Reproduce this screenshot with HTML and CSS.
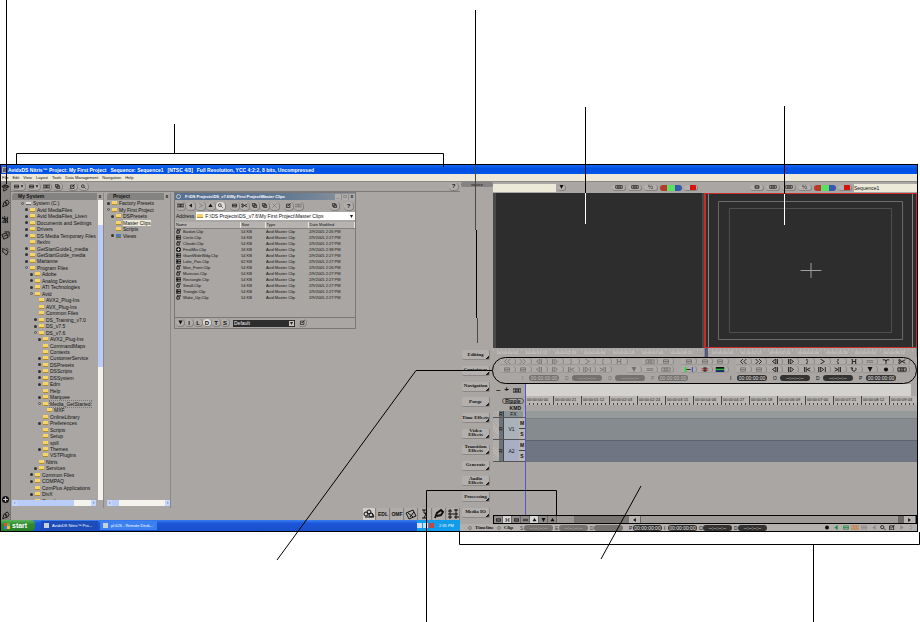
FILE: index.html
```html
<!DOCTYPE html>
<html lang="en">
<head>
    <meta charset="UTF-8">
    <meta name="viewport" content="width=device-width, initial-scale=1.0">
    <title>Avid DS Nitris</title>
    <link rel="stylesheet" href="styles.css">
</head>
<body>

<!-- icons -->
<svg class="defs" aria-hidden="true">
    <symbol id="rew" viewBox="0 0 10 6"><path d="M5 0L2 3l3 3M9 0L6 3l3 3"/></symbol>
    <symbol id="ffw" viewBox="0 0 10 6"><path d="M1 0l3 3-3 3M5 0l3 3-3 3"/></symbol>
    <symbol id="stepb" viewBox="0 0 10 6"><path d="M6 0L2 3l4 3zM8 0v6"/></symbol>
    <symbol id="stepf" viewBox="0 0 10 6"><path d="M4 0l4 3-4 3zM2 0v6"/></symbol>
    <symbol id="in" viewBox="0 0 10 6"><path d="M4 0h1v2l1 1-1 1v2H4"/></symbol>
    <symbol id="play" viewBox="0 0 10 6"><path d="M3 0l5 3-5 3"/></symbol>
    <symbol id="out" viewBox="0 0 10 6"><path d="M6 0H5v2L4 3l1 1v2h1"/></symbol>
    <symbol id="inout" viewBox="0 0 10 6"><path d="M2 0h1v6H2M8 0H7v6h1M3 3h4"/></symbol>
    <symbol id="goin" viewBox="0 0 10 6"><path d="M2 0v6M4 0v6M9 1L5 3l4 2"/></symbol>
    <symbol id="range" viewBox="0 0 10 6"><path d="M1 0v6M9 0v6M3 0l4 3-4 3z"/></symbol>
    <symbol id="goout" viewBox="0 0 10 6"><path d="M8 0v6M6 0v6M1 1l4 2-4 2"/></symbol>
    <symbol id="film" viewBox="0 0 10 6"><path d="M0 1h10v4H0zM3 1v4M7 1v4M5 1v4"/></symbol>
    <symbol id="box" viewBox="0 0 10 6"><path d="M2 1h6v4H2zM2 3h6"/></symbol>
    <symbol id="down" viewBox="0 0 10 6"><path class="solid" d="M2 0h6L5 6z"/></symbol>
    <symbol id="up" viewBox="0 0 10 6"><path class="solid" d="M2 5h6L5 0z"/></symbol>
    <symbol id="left" viewBox="0 0 10 6"><path class="solid" d="M7 0v6L3 3z"/></symbol>
    <symbol id="right" viewBox="0 0 10 6"><path class="solid" d="M3 0v6l4-3z"/></symbol>
    <symbol id="dot" viewBox="0 0 10 6"><circle class="solid" cx="5" cy="3" r="2.5"/></symbol>
    <symbol id="link" viewBox="0 0 10 6"><path d="M1 2h8M1 4h8"/></symbol>
    <symbol id="loop" viewBox="0 0 10 6"><path d="M3 1a2.5 2.5 0 1 0 4 0M3 3V1H1"/></symbol>
    <symbol id="fork" viewBox="0 0 10 6"><path d="M1 1h3l1 2 1-2h3M5 3v3"/></symbol>
    <symbol id="cut" viewBox="0 0 10 6"><path d="M9 1L3 4M9 5L3 2"/><circle cx="2" cy="1.500" r="1"/><circle cx="2" cy="4.500" r="1"/></symbol>
    <symbol id="marks" viewBox="0 0 10 6"><path stroke="#2d2" stroke-width="2" d="M1 0v6"/><path d="M2 3h5"/><path stroke="#22c" d="M9 0v6"/></symbol>
    <symbol id="grid" viewBox="0 0 10 6"><path stroke="#b33" d="M1 2h8M1 4h8"/><path d="M4 0v6M6 0v6"/></symbol>
    <symbol id="strip" viewBox="0 0 10 6"><path class="solid" d="M0 0h10v6H0z"/><path stroke="#2b4" stroke-width="2" d="M0 3h10"/><path stroke="#33c" d="M0 5h10"/></symbol>
    <symbol id="clip" viewBox="0 0 6 6"><path stroke-width="1" d="M5 0H2v2H1v3h3V2H2M5 0v2"/></symbol>
    <symbol id="reel" viewBox="0 0 6 6"><path d="M0 1h6v4H0zM0 3h6M2 1v4"/></symbol>
    <symbol id="mix" viewBox="0 0 6 6"><circle class="solid" cx="3" cy="3" r="3"/><path stroke="#ccc" d="M3 1v4M1 3h4"/></symbol>
    <symbol id="lens" viewBox="0 0 10 6"><circle cx="4" cy="2.500" r="2"/><path d="M6 4l2 2"/></symbol>
    <symbol id="pages" viewBox="0 0 10 6"><path d="M2 0h4v4H2zM4 2h4v4H4z"/></symbol>
    <symbol id="check" viewBox="0 0 10 6"><path d="M2 1h5v5H2zM3 3l1 1 4-4"/></symbol>
    <symbol id="cross" viewBox="0 0 10 6"><path d="M2 0l6 6M8 0L2 6"/></symbol>
    <symbol id="tool" viewBox="0 0 10 10"><path d="M1 4l4-2 4 2-4 2zM2 3l5 2M4 2l4 2"/><path d="M3 6v3l4-2"/></symbol>
    <symbol id="tool2" viewBox="0 0 10 10"><path d="M2 9l1-5 4-3 2 3-2 3-4 1zM4 4l3 1M5 3l1 4"/></symbol>
    <symbol id="tool3" viewBox="0 0 10 10"><path stroke-width="1" d="M1 2l7 6M2 7l6-4M1 4h4M4 1l1 8M7 2v7M1 8h5"/></symbol>
    <symbol id="tool4" viewBox="0 0 10 10"><path d="M1 4l5-2 2 5-5 2zM4 1h5v5M3 6l4-2"/></symbol>
    <symbol id="tool5" viewBox="0 0 10 10"><path d="M3 2l5 3-2 4-4-4M2 1v5M6 1l2 2"/></symbol>
</svg>

<main class="page">
    <div class="app">
        <header class="titlebar">
            <span class="appicon"></span>
            <b>AvidxDS Nitris™ Project: My First Project</b>
            <b>Sequence: Sequence1</b>
            <b>[NTSC 4/3]</b>
            <b>Full Resolution, YCC 4:2:2, 8 bits, Uncompressed</b>
        </header>
        <nav class="menubar">
            <a href="#">File</a><a href="#">Edit</a><a href="#">View</a><a href="#">Layout</a><a href="#">Tools</a><a href="#">Data Management</a><a href="#">Navigation</a><a href="#">Help</a>
        </nav>

        <div class="screens">
            <!-- left monitor -->
            <section class="left">
                <div class="explorer">
                    <div class="strip">
                        <button aria-label="Project"><svg><use href="#tool"/></svg></button>
                        <button aria-label="Editing"><svg><use href="#tool2"/></svg></button>
                        <button aria-label="Graphics"><svg><use href="#tool3"/></svg></button>
                        <button aria-label="Audio"><svg><use href="#tool4"/></svg></button>
                        <button aria-label="Output"><svg><use href="#tool5"/></svg></button>
                        <button class="low" aria-label="Info"><svg><use href="#mix"/></svg></button>
                        <button aria-label="Layout"><svg><use href="#tool2"/></svg></button>
                    </div>
                    <div class="content">
                        <div class="toolbar">
                            <button class="rb wide" aria-label="Tree"><svg><use href="#box"/></svg><svg class="tiny"><use href="#down"/></svg></button>
                            <button class="rb wide" aria-label="List"><svg><use href="#box"/></svg><svg class="tiny"><use href="#down"/></svg></button>
                            <button class="rb" aria-label="Grid"><svg><use href="#film"/></svg></button>
                            <button class="rb" aria-label="Cascade"><svg><use href="#pages"/></svg></button>
                            <button class="rb gap" aria-label="Find clip"><svg><use href="#check"/></svg></button>
                            <button class="rb" aria-label="Find"><svg><use href="#lens"/></svg></button>
                            <button class="rb help" aria-label="Help">?</button>
                        </div>
                        <div class="desk">
                            <div class="panel system">
                                <h2>My System <button aria-label="Close My System">x</button></h2>
                                <div class="pane">
                                    <ul class="tree">
                                        <li class="l0 t open disk">System (C:)</li>
                                        <li class="l1 t">Avid MediaFiles</li>
                                        <li class="l1 t">Avid MediaFiles_Liven</li>
                                        <li class="l1 t">Documents and Settings</li>
                                        <li class="l1 t">Drivers</li>
                                        <li class="l1 t">DS Media Temporary Files</li>
                                        <li class="l1">flexlm</li>
                                        <li class="l1 t">GetStartGuide1_media</li>
                                        <li class="l1 t">GetStartGuide_media</li>
                                        <li class="l1 t">Marianne</li>
                                        <li class="l1 t open">Program Files</li>
                                        <li class="l2 t">Adobe</li>
                                        <li class="l2 t">Analog Devices</li>
                                        <li class="l2 t">ATI Technologies</li>
                                        <li class="l2 t open">Avid</li>
                                        <li class="l3">AVX2_Plug-Ins</li>
                                        <li class="l3">AVX_Plug-Ins</li>
                                        <li class="l3">Common Files</li>
                                        <li class="l3 t">DS_Training_v7.0</li>
                                        <li class="l3 t">DS_v7.5</li>
                                        <li class="l3 t open">DS_v7.6</li>
                                        <li class="l4 t">AVX2_Plug-Ins</li>
                                        <li class="l4">CommandMaps</li>
                                        <li class="l4">Contexts</li>
                                        <li class="l4 t">CustomerService</li>
                                        <li class="l4 t">DSPresets</li>
                                        <li class="l4 t">DSScripts</li>
                                        <li class="l4 t">DSSystem</li>
                                        <li class="l4 t">Edm</li>
                                        <li class="l4">Help</li>
                                        <li class="l4 t">Marquee</li>
                                        <li class="l4 t open"><span class="focus">Media_GetStarted</span></li>
                                        <li class="l5">MXF</li>
                                        <li class="l4">OnlineLibrary</li>
                                        <li class="l4 t">Preferences</li>
                                        <li class="l4">Scripts</li>
                                        <li class="l4">Setup</li>
                                        <li class="l4">spill</li>
                                        <li class="l4 t">Themes</li>
                                        <li class="l4">VSTPlugins</li>
                                        <li class="l3">Nitris</li>
                                        <li class="l3 t">Services</li>
                                        <li class="l2 t">Common Files</li>
                                        <li class="l2 t">COMPAQ</li>
                                        <li class="l2">ComPlus Applications</li>
                                        <li class="l2 t">DivX</li>
                                        <li class="l2">Google</li>
                                    </ul>
                                    <div class="vscroll"><i></i></div>
                                </div>
                                <div class="hscroll"><span>‹</span><i></i><span>›</span></div>
                            </div>
                            <div class="panel project">
                                <h2>Project <button aria-label="Close Project">x</button></h2>
                                <div class="pane">
                                    <ul class="tree short">
                                        <li class="p0 t">Factory Presets</li>
                                        <li class="p0 t open">My First Project</li>
                                        <li class="p1 t">DSPresets</li>
                                        <li class="p1"><span class="sel">Master Clips</span></li>
                                        <li class="p1">Scripts</li>
                                        <li class="p1 t views">Views</li>
                                    </ul>
                                </div>
                                <div class="hscroll small"><span>‹</span><i></i><span>›</span></div>
                            </div>
                            <div class="desktop">
                                <div class="window">
                                    <div class="wtitle"><span class="ring"></span>F:\DS Projects\DS_v7.6\My First Project\Master Clips<span class="wbtns"><i>_</i><i>□</i><i>x</i></span></div>
                                    <div class="wtools">
                                        <button class="rb" aria-label="View"><svg><use href="#film"/></svg></button>
                                        <button class="rb" aria-label="Back"><svg><use href="#left"/></svg></button>
                                        <button class="rb dim" aria-label="Forward"><svg><use href="#play"/></svg></button>
                                        <button class="rb" aria-label="Up"><svg><use href="#up"/></svg></button>
                                        <button class="rb on" aria-label="Search"><svg><use href="#lens"/></svg></button>
                                        <button class="rb gap" aria-label="New"><svg><use href="#box"/></svg></button>
                                        <button class="rb" aria-label="Cut"><svg><use href="#cut"/></svg></button>
                                        <button class="rb" aria-label="Copy"><svg><use href="#pages"/></svg></button>
                                        <button class="rb" aria-label="Paste"><svg><use href="#pages"/></svg></button>
                                        <button class="rb dim" aria-label="Delete"><svg><use href="#cross"/></svg></button>
                                        <button class="rb gap" aria-label="Properties"><svg><use href="#check"/></svg></button>
                                        <button class="rb dim" aria-label="Columns"><svg><use href="#film"/></svg></button>
                                        <button class="rb end" aria-label="Link"><svg><use href="#pages"/></svg></button>
                                        <button class="rb gap" aria-label="Help">?</button>
                                    </div>
                                    <label class="address">Address
                                        <span class="field"><i class="folder"></i><input type="text" value="F:\DS Projects\DS_v7.6\My First Project\Master Clips"><svg><use href="#down"/></svg></span>
                                    </label>
                                    <table class="files">
                                        <thead><tr><th class="cname">Name</th><th class="csize">Size</th><th class="ctype">Type</th><th>Date Modified</th></tr></thead>
                                        <tbody>
                                            <tr><td><svg><use href="#clip"/></svg>Basket.Clip</td><td>54 KB</td><td>Avid Master Clip</td><td>2/9/2005 2:26 PM</td></tr>
                                            <tr><td><svg><use href="#reel"/></svg>Circle.Clip</td><td>54 KB</td><td>Avid Master Clip</td><td>2/9/2005 2:27 PM</td></tr>
                                            <tr><td><svg><use href="#clip"/></svg>Clouds.Clip</td><td>54 KB</td><td>Avid Master Clip</td><td>2/9/2005 2:27 PM</td></tr>
                                            <tr><td><svg><use href="#mix"/></svg>FinalMix.Clip</td><td>16 KB</td><td>Avid Master Clip</td><td>2/9/2005 2:38 PM</td></tr>
                                            <tr><td><svg><use href="#reel"/></svg>GiantWideWdg.Clip</td><td>54 KB</td><td>Avid Master Clip</td><td>2/9/2005 2:27 PM</td></tr>
                                            <tr><td><svg><use href="#reel"/></svg>Lake_Pan.Clip</td><td>62 KB</td><td>Avid Master Clip</td><td>2/9/2005 2:27 PM</td></tr>
                                            <tr><td><svg><use href="#clip"/></svg>Man_Front.Clip</td><td>54 KB</td><td>Avid Master Clip</td><td>2/9/2005 2:26 PM</td></tr>
                                            <tr><td><svg><use href="#clip"/></svg>Musician.Clip</td><td>54 KB</td><td>Avid Master Clip</td><td>2/9/2005 2:27 PM</td></tr>
                                            <tr><td><svg><use href="#reel"/></svg>Rectangle.Clip</td><td>54 KB</td><td>Avid Master Clip</td><td>2/9/2005 2:27 PM</td></tr>
                                            <tr><td><svg><use href="#clip"/></svg>Small.Clip</td><td>54 KB</td><td>Avid Master Clip</td><td>2/9/2005 2:27 PM</td></tr>
                                            <tr><td><svg><use href="#reel"/></svg>Triangle.Clip</td><td>54 KB</td><td>Avid Master Clip</td><td>2/9/2005 2:27 PM</td></tr>
                                            <tr><td><svg><use href="#clip"/></svg>Wake_Up.Clip</td><td>54 KB</td><td>Avid Master Clip</td><td>2/9/2005 2:27 PM</td></tr>
                                        </tbody>
                                    </table>
                                    <div class="wfoot">
                                        <button class="rb" aria-label="Menu"><svg><use href="#down"/></svg></button>
                                        <button class="rb">I</button>
                                        <button class="rb">L</button>
                                        <button class="rb on">D</button>
                                        <button class="rb">T</button>
                                        <button class="rb">S</button>
                                        <span class="preset"><select aria-label="View preset"><option>Default</option></select><svg><use href="#down"/></svg></span>
                                        <button class="rb" aria-label="Save view"><svg><use href="#check"/></svg></button>
                                    </div>
                                </div>
                                <div class="dock">
                                    <button class="lit" aria-label="Reels"><svg viewBox="0 0 12 10"><circle cx="3" cy="5" r="2"/><circle cx="6" cy="3" r="2"/><circle cx="8" cy="6" r="2"/><path d="M2 8h9l-2-4"/></svg></button>
                                    <button>EDL</button>
                                    <button>OMF</button>
                                    <button aria-label="Film"><svg viewBox="0 0 12 10"><path d="M1 4l7-3 3 6-7 3zM3 4l5 4M9 3L5 8"/></svg></button>
                                    <button aria-label="Title"><svg viewBox="0 0 12 10"><path d="M3 1h5M5 1v3l2 1-2 4M3 9h5M7 3v3"/></svg></button>
                                    <button aria-label="Paint"><svg viewBox="0 0 12 10"><path stroke-width="2" d="M2 9l2-5 4-3 2 2-2 3-4 1"/></svg></button>
                                    <button aria-label="Effects"><svg viewBox="0 0 12 10"><path d="M1 2h4M1 5h10M1 8h4M3 0v10M7 1h4M7 8h5M9 0v10"/></svg></button>
                                </div>
                            </div>
                        </div>
                    </div>
                </div>
                <div class="taskbar">
                    <button class="start"><span class="flag"></span>start</button>
                    <button class="task dark"><i></i>AvidxDS Nitris™ Pro...</button>
                    <button class="task"><i></i>pl.626 - Remote Desk...</button>
                    <div class="tray"><i></i><i></i><i class="red"></i>2:35 PM</div>
                </div>
            </section>

            <!-- right monitor -->
            <section class="right">
                <div class="editor">
                    <div class="rail">
                        <div class="tab">source</div>
                        <div class="modes">
                            <button>Editing</button>
                            <button>Containers</button>
                            <button>Navigation</button>
                            <button>Purge</button>
                            <button>Time Effects</button>
                            <button>Video<br>Effects</button>
                            <button>Transition<br>Effects</button>
                            <button>Generate</button>
                            <button>Audio<br>Effects</button>
                            <button>Processing</button>
                            <button>Media IO</button>
                        </div>
                    </div>
                    <div class="work">
                        <div class="viewers">
                            <div class="viewer">
                                <div class="vhead">
                                    <input type="text" class="name" aria-label="Source clip">
                                    <button class="vb" aria-label="Clips"><svg><use href="#down"/></svg></button>
                                    <button class="vb push" aria-label="Mode"><svg><use href="#film"/></svg></button>
                                    <button class="vb" aria-label="Display"><svg><use href="#film"/></svg></button>
                                    <button class="vb" aria-label="Field">½</button>
                                    <span class="rgb"><i></i><i></i><i></i></span>
                                    <button class="vb key" aria-label="Lock"></button>
                                </div>
                                <div class="screen source"></div>
                            </div>
                            <div class="viewer record">
                                <div class="vhead">
                                    <button class="vb push" aria-label="Layout"><svg><use href="#box"/></svg></button>
                                    <button class="vb" aria-label="Mode"><svg><use href="#film"/></svg></button>
                                    <button class="vb" aria-label="Display"><svg><use href="#film"/></svg></button>
                                    <button class="vb" aria-label="Field">½</button>
                                    <span class="rgb"><i></i><i></i><i></i></span>
                                    <button class="vb key" aria-label="Lock"></button>
                                    <input type="text" class="name" value="Sequence1" aria-label="Sequence">
                                </div>
                                <div class="screen">
                                    <svg viewBox="0 0 211 153" preserveAspectRatio="none">
                                        <path stroke="#8a8a8a" d="M2.500 0v153M207.500 0v153"/>
                                        <path stroke="#6b6b6b" d="M12.500 7.500h185v138h-185z"/>
                                        <path stroke="#4f4f4f" d="M23.500 14.500h163v124h-163z"/>
                                        <path stroke="#a0a0a0" d="M95 76.500h21M105.500 69v15"/>
                                    </svg>
                                </div>
                            </div>
                        </div>
                        <div class="minirulers">
                            <div class="mini"><span>00:00:00:00</span><span>00:00:01:12</span><span>00:00:02:24</span><span>00:00:04:06</span><span>00:00:05:18</span><span>00:00:07:00</span><span>00:00:08:12</span></div>
                            <div class="mini mark"><span>00:00:00:00</span><span>00:00:01:12</span><span>00:00:02:24</span><span>00:00:04:06</span><span>00:00:05:18</span><span>00:00:07:00</span><span>00:00:08:12</span></div>
                        </div>
                        <div class="transport">
                            <div class="row">
                                <div class="grp dim">
                                    <button aria-label="Rewind"><svg><use href="#rew"/></svg></button><button aria-label="Fast forward"><svg><use href="#ffw"/></svg></button><button aria-label="Step back"><svg><use href="#stepb"/></svg></button><button aria-label="Step forward"><svg><use href="#stepf"/></svg></button><button aria-label="Mark in"><svg><use href="#in"/></svg></button><button aria-label="Play"><svg><use href="#play"/></svg></button><button aria-label="Mark out"><svg><use href="#out"/></svg></button><button aria-label="Mark clip"><svg><use href="#inout"/></svg></button><span></span><button aria-label="Match"><svg><use href="#film"/></svg></button><button aria-label="Locate"><svg><use href="#box"/></svg></button>
                                </div>
                                <div class="grp mid dim">
                                    <button aria-label="Insert"><svg><use href="#box"/></svg></button><button aria-label="Overwrite"><svg><use href="#box"/></svg></button><button aria-label="Replace"><svg><use href="#box"/></svg></button>
                                </div>
                                <div class="grp">
                                    <button aria-label="Rewind"><svg><use href="#rew"/></svg></button><button aria-label="Fast forward"><svg><use href="#ffw"/></svg></button><button aria-label="Step back"><svg><use href="#stepb"/></svg></button><button aria-label="Step forward"><svg><use href="#stepf"/></svg></button><button aria-label="Mark in"><svg><use href="#in"/></svg></button><button aria-label="Play"><svg><use href="#play"/></svg></button><button aria-label="Mark out"><svg><use href="#out"/></svg></button><button aria-label="Mark clip"><svg><use href="#inout"/></svg></button><button class="off" aria-label="Lift"><svg><use href="#link"/></svg></button><button aria-label="Extract"><svg><use href="#fork"/></svg></button><button aria-label="Razor"><svg><use href="#cut"/></svg></button>
                                </div>
                            </div>
                            <div class="row">
                                <div class="grp dim">
                                    <button aria-label="Undo"><svg><use href="#box"/></svg></button><button aria-label="Redo"><svg><use href="#box"/></svg></button><button aria-label="Back 10"><svg><use href="#stepb"/></svg></button><button aria-label="Forward 10"><svg><use href="#stepf"/></svg></button><button aria-label="Go to in"><svg><use href="#goin"/></svg></button><button aria-label="Play in to out"><svg><use href="#range"/></svg></button><button aria-label="Go to out"><svg><use href="#goout"/></svg></button><span></span><button aria-label="Marker"><svg><use href="#down"/></svg></button><button aria-label="Gang"><svg><use href="#link"/></svg></button><button aria-label="Clip"><svg><use href="#film"/></svg></button>
                                </div>
                                <div class="grp mid">
                                    <button aria-label="Trim"><svg><use href="#marks"/></svg></button><button aria-label="Snap"><svg><use href="#grid"/></svg></button><button aria-label="Strip"><svg><use href="#strip"/></svg></button>
                                </div>
                                <div class="grp">
                                    <button class="off" aria-label="Undo"><svg><use href="#box"/></svg></button><button class="off" aria-label="Redo"><svg><use href="#box"/></svg></button><button aria-label="Back 10"><svg><use href="#stepb"/></svg></button><button aria-label="Forward 10"><svg><use href="#stepf"/></svg></button><button aria-label="Go to in"><svg><use href="#goin"/></svg></button><button aria-label="Play in to out"><svg><use href="#range"/></svg></button><button aria-label="Go to out"><svg><use href="#goout"/></svg></button><button aria-label="Loop"><svg><use href="#loop"/></svg></button><button aria-label="Marker"><svg><use href="#down"/></svg></button><button aria-label="Record"><svg><use href="#dot"/></svg></button><button aria-label="Clip"><svg><use href="#film"/></svg></button>
                                </div>
                            </div>
                            <div class="row codes">
                                <div class="tcs dim">
                                    <label>I<input value="00:00:00:00"></label><label>D<input value="--:--:--:--"></label><label>O<input value="--:--:--:--"></label><label>P<input value="00:00:00:00"></label>
                                </div>
                                <div class="tcs rec">
                                    <label>I<input value="00:00:00:00"></label><label>O<input value="--:--:--:--"></label><label>D<input value="--:--:--:--"></label><label>P<input value="00:00:00:00"></label>
                                </div>
                            </div>
                        </div>
                        <div class="timeline">
                            <div class="corner">
                                <button aria-label="Zoom out">–</button><button aria-label="Zoom in">+</button><button aria-label="Fit"><svg><use href="#film"/></svg></button>
                            </div>
                            <div class="overview"></div>
                            <div class="ripple"><button>Ripple</button></div>
                            <div class="ruler"><span>00:00:00:00</span><span>00:00:00:21</span><span>00:00:01:12</span><span>00:00:02:03</span><span>00:00:02:24</span><span>00:00:03:15</span><span>00:00:04:06</span><span>00:00:04:27</span><span>00:00:05:18</span><span>00:00:06:09</span><span>00:00:07:00</span><span>00:00:07:21</span><span>00:00:08:12</span><span>00:00:09:03</span></div>
                            <div class="kmd">KMD</div>
                            <div></div>
                            <div class="thead fx"><i>R</i><b>FX</b></div>
                            <div class="track fx"></div>
                            <div class="thead"><i>R</i><b>V1</b><span class="ms"><button>M</button><button>S</button></span></div>
                            <div class="track v1"></div>
                            <div class="thead a2"><i>R</i><b>A2</b><span class="ms"><button>M</button><button>S</button></span></div>
                            <div class="track a2"></div>
                            <div class="playhead"></div>
                        </div>
                        <div class="scrollrow">
                            <button aria-label="Lock"><svg><use href="#box"/></svg></button><button class="on" aria-label="Sync"><svg><use href="#inout"/></svg></button><button aria-label="Video"><svg><use href="#box"/></svg></button><button aria-label="Link"><svg><use href="#link"/></svg></button><button class="on" aria-label="Select"><svg><use href="#up"/></svg></button><button aria-label="Down"><svg><use href="#down"/></svg></button><button aria-label="Up"><svg><use href="#up"/></svg></button>
                            <div class="hthumb"></div>
                            <div class="track2"></div>
                            <button class="arrow" aria-label="Scroll left"><svg><use href="#left"/></svg></button>
                            <div class="bar"></div>
                            <div class="rest"></div>
                            <button class="arrow" aria-label="Scroll right"><svg><use href="#right"/></svg></button>
                        </div>
                    </div>
                </div>
                <div class="status">
                    <label class="mode"><input type="radio" name="scope" checked>Timeline</label>
                    <label class="mode"><input type="radio" name="scope">Clip</label>
                    <div class="stcs">
                        <label class="dim">S<input value="--:--:--:--"></label>
                        <label class="dim">E<input value="--:--:--:--"></label>
                        <label class="dim">D<input value=""></label>
                        <label class="pos">P<input value="00:00:00:00"></label>
                        <label>I<input value="00:00:00:00"></label>
                        <label>O<input value="--:--:--:--"></label>
                        <label>D<input value="--:--:--:--"></label>
                    </div>
                    <div class="sicons">
                        <svg><use href="#dot"/></svg><svg class="green"><use href="#left"/></svg><svg class="green"><use href="#box"/></svg><svg class="orange"><use href="#film"/></svg><svg class="pale"><use href="#box"/></svg><svg class="pale"><use href="#left"/></svg><svg><use href="#lens"/></svg><svg><use href="#check"/></svg><svg class="pale"><use href="#right"/></svg><svg class="pale"><use href="#in"/></svg>
                    </div>
                </div>
            </section>
        </div>
    </div>

    <!-- callout lines -->
    <svg class="callouts" viewBox="0 0 920 622" preserveAspectRatio="none" aria-hidden="true">
        <path d="M6.500 0v184M16.500 164v-10.500h427V167M174.500 124v29.500"/>
        <path d="M475.500 10v155M476.500 230v88"/>
        <path stroke="#4a4848" d="M475.500 165v65M477.500 318v25"/>
        <path d="M585.500 107v86M784.500 106v88"/>
        <path stroke="#fff" d="M585.500 193v31M784.500 194v31"/>
        <rect x="492.500" y="357.500" width="424" height="26" rx="13"/>
        <path d="M492 370.500h-76L277 560"/>
        <path d="M426.500 622V490.500h130V515"/>
        <path d="M459.500 532v12.500h460V532M813.500 544v78"/>
        <path d="M641 486l-40 73"/>
    </svg>
</main>

</body>
</html>
```
FILE: styles.css
```css
*, *::before, *::after {
    box-sizing: border-box;
}
body {
    margin: 0;
    background: #fff;
    font-family: "Liberation Sans", Arial, sans-serif;
    font-size: 5px;
    line-height: 6px;
    color: #111;
}
button, input, select {
    font: inherit;
    color: inherit;
    margin: 0;
    padding: 0;
    border: 0;
    min-width: 0;
    background: none;
}
svg {
    display: block;
    fill: none;
    stroke: currentColor;
    stroke-width: 1;
    overflow: visible;
}
.solid {
    fill: currentColor;
    stroke: none;
}
.defs {
    position: absolute;
    width: 0;
    height: 0;
}
.page {
    position: relative;
    padding: 164px 2px 90px 0;
    overflow: hidden;
}
.app {
    border: 1px solid #000;
    background: #a9a6a3;
}
.callouts {
    position: absolute;
    left: 0;
    top: 0;
    width: 100%;
    height: 622px;
    stroke: #000;
    pointer-events: none;
}

/* title and menu */
.titlebar {
    display: flex;
    align-items: center;
    height: 9px;
    gap: 4px;
    padding-left: 1px;
    background: linear-gradient(#1668f0, #0050e4 40%, #0054ea);
    color: #fff;
    white-space: nowrap;
}
.titlebar .appicon {
    width: 5px;
    height: 6px;
    margin-right: -3px;
    background: #666;
    border: 1px solid #aaa;
}
.menubar {
    display: flex;
    gap: 4px;
    height: 8px;
    padding-left: 1px;
    background: #ece9d8;
    border-bottom: 1px solid #8a8886;
    font-size: 4px;
    line-height: 7px;
}
.menubar a {
    color: #111;
    text-decoration: none;
}
.screens {
    display: grid;
    grid-template-columns: 459fr 457fr;
    height: 349px;
}

/* left monitor */
.left, .right {
    display: flex;
    flex-direction: column;
    min-width: 0;
}
.explorer {
    display: flex;
    flex: 1;
    min-height: 0;
}
.strip {
    display: flex;
    flex-direction: column;
    gap: 6px;
    width: 10px;
    background: #888583;
    border-right: 1px solid #777472;
}
.strip button {
    height: 10px;
}
.strip svg {
    width: 9px;
    height: 9px;
}
.strip .low {
    margin-top: auto;
}
.strip .low svg {
    width: 7px;
    height: 7px;
    margin-left: 1px;
}
.content {
    display: flex;
    flex: 1;
    flex-direction: column;
    min-width: 0;
}
.toolbar {
    display: flex;
    align-items: center;
    gap: 1px;
    height: 10px;
    padding: 0 1px;
    border-bottom: 1px solid #7d7a78;
}
.rb {
    display: flex;
    align-items: center;
    justify-content: center;
    width: 10px;
    height: 8px;
    border-radius: 4px;
    background: #b0adaa;
    border-right: 1px solid #84817f;
    border-bottom: 1px solid #84817f;
    font-size: 6px;
    font-weight: bold;
}
.rb svg {
    width: 7px;
    height: 5px;
}
.rb .tiny {
    width: 4px;
    height: 3px;
}
.rb.wide {
    width: 14px;
}
.rb.on {
    background: #dddbd9;
}
.rb.gap {
    margin-left: 4px;
}
.rb.help, .rb.end {
    margin-left: auto;
}
.dim, .off {
    color: #74716f;
}
.desk {
    display: flex;
    flex: 1;
    gap: 3px;
    min-height: 0;
    padding-left: 1px;
}
.panel {
    margin: 1px 0 12px;
    border-right: 1px solid #8b8886;
}
.system {
    width: 92px;
}
.project {
    width: 64px;
}
.panel h2 {
    display: flex;
    justify-content: space-between;
    margin: 0;
    height: 7px;
    padding-left: 6px;
    border-radius: 3px 0 0 0;
    background: #858381;
    font-size: 5px;
    line-height: 7px;
}
.panel h2 button {
    width: 6px;
    background: #a9a6a3;
    font-weight: bold;
}
.pane {
    display: flex;
    height: 300px;
    overflow: hidden;
}
.tree {
    display: grid;
    grid-auto-rows: 1fr;
    flex: 1;
    height: 304px;
    margin: 0;
    padding: 0;
    list-style: none;
    overflow: hidden;
}
.tree.short {
    height: 39px;
}
.tree li {
    display: flex;
    align-items: center;
    white-space: nowrap;
}
.tree li::before {
    content: "";
    order: -2;
    width: 3px;
    height: 3px;
    margin-right: 2px;
    flex: none;
}
.tree .t::before {
    border-radius: 2px;
    background: #333;
}
.tree .open::before {
    background: none;
    border: 1px solid #555;
}
.tree li::after {
    content: "";
    order: -1;
    width: 5px;
    margin-right: 2px;
    flex: none;
}
.tree li::after, .folder {
    height: 4px;
    background: #f6d466;
    border-bottom: 1px solid #b58a28;
}
.tree .disk::after {
    height: 3px;
    background: #ddd;
    border-color: #666;
}
.tree .views::after {
    background: #4878b8;
    border-color: #8a6a40;
}
.folder {
    width: 6px;
}
.l0 { padding-left: 9px; }
.l1 { padding-left: 13px; }
.l2 { padding-left: 18px; }
.l3 { padding-left: 22px; }
.l4 { padding-left: 26px; }
.l5 { padding-left: 30px; }
.p0 { padding-left: 0; }
.p1 { padding-left: 4px; }
.focus {
    outline: 1px dotted #777;
}
.sel {
    background: #ece9d8;
}
.vscroll {
    width: 5px;
    padding-top: 25px;
    background: #f4f3ee;
}
.vscroll i {
    display: block;
    height: 142px;
    background: #b9cdf8;
}
.hscroll {
    display: flex;
    width: 84px;
    height: 6px;
    background: #f4f3ee;
    color: #3858a8;
    line-height: 5px;
}
.hscroll span {
    width: 5px;
    background: #c6d6fa;
    text-align: center;
}
.hscroll i {
    width: 57px;
    margin-right: auto;
    background: #b9cdf8;
}
.hscroll.small {
    width: 63px;
}
.hscroll.small i {
    width: 7px;
}

/* floating clip window */
.desktop {
    position: relative;
    flex: 1;
    min-width: 0;
}
.window {
    position: absolute;
    left: 0;
    top: 0;
    width: 182px;
    height: 137px;
    display: flex;
    flex-direction: column;
    border: 1px solid #7b7876;
    background: #a9a6a3;
}
.wtitle {
    display: flex;
    align-items: center;
    height: 7px;
    background: linear-gradient(90deg, #587090, #607894 60%, #8d949c);
    color: #fff;
    font-size: 4px;
    font-weight: bold;
    white-space: nowrap;
}
.ring {
    width: 5px;
    height: 5px;
    margin: 0 4px 0 1px;
    border: 1px solid #c0c8d0;
    border-radius: 3px;
}
.wbtns {
    display: flex;
    gap: 1px;
    margin-left: auto;
    color: #222;
}
.wbtns i {
    width: 6px;
    height: 6px;
    background: #b0adaa;
    font-size: 5px;
    font-style: normal;
    line-height: 5px;
    text-align: center;
}
.wtools {
    display: flex;
    align-items: center;
    height: 12px;
    padding: 0 1px;
}
.wtools .rb {
    height: 9px;
}
.address {
    display: flex;
    align-items: center;
    gap: 2px;
    height: 8px;
    padding-left: 1px;
}
.field {
    display: flex;
    flex: 1;
    align-items: center;
    height: 8px;
    padding: 0 1px;
    background: #fff;
}
.field input {
    flex: 1;
    margin-left: 2px;
}
.field svg {
    width: 5px;
    height: 3px;
}
.files {
    width: 100%;
    margin-top: 2px;
    table-layout: fixed;
    border-collapse: collapse;
    font-size: 4px;
    line-height: 6px;
    white-space: nowrap;
}
.files th {
    padding: 0 0 0 1px;
    text-align: left;
    font-weight: normal;
    background: #b6b3b0;
    border-right: 1px solid #e8e6e4;
    border-bottom: 1px solid #84817f;
}
.files td {
    height: 6px;
    padding: 0 0 0 1px;
}
.files svg {
    display: inline-block;
    width: 5px;
    height: 5px;
    margin-right: 2px;
    vertical-align: top;
}
.cname { width: 65px; }
.csize { width: 25px; }
.ctype { width: 43px; }
.wfoot {
    display: flex;
    align-items: center;
    height: 11px;
    margin-top: auto;
    padding: 0 1px;
    border-top: 1px solid #7b7876;
}
.wfoot .rb {
    width: 9px;
}
.preset {
    display: flex;
    align-items: center;
    width: 62px;
    height: 7px;
    margin: 0 3px;
    padding: 0 1px;
    background: #2d2d2d;
    color: #eee;
}
.preset select {
    flex: 1;
    appearance: none;
    font-size: 5px;
    line-height: 7px;
}
.preset svg {
    width: 5px;
    height: 5px;
    padding: 1px 0;
    background: #c8c5c2;
    color: #222;
}
.dock {
    position: absolute;
    right: 0;
    bottom: 0;
    display: flex;
    gap: 1px;
}
.dock button {
    width: 13px;
    height: 12px;
    padding: 1px 0;
    background: #b0adaa;
    border-right: 1px solid #84817f;
    font-weight: bold;
}
.dock .lit {
    background: #d0cecb;
}
.dock svg {
    width: 12px;
    height: 10px;
}

/* taskbar */
.taskbar {
    display: flex;
    height: 11px;
    background: linear-gradient(#3a80f0, #1c55d8 30%, #1a50cc);
    color: #fff;
}
.start {
    display: flex;
    align-items: center;
    gap: 2px;
    width: 34px;
    padding-left: 3px;
    border-radius: 0 4px 4px 0;
    background: linear-gradient(#5cb55a, #2f8a30 40%, #2c7f2c);
    font-size: 7px;
    font-weight: bold;
}
.flag {
    width: 6px;
    height: 6px;
    background: conic-gradient(#58b848 25%, #f0c030 0 50%, #3878e0 0 75%, #e05028 0);
}
.task {
    display: flex;
    align-items: center;
    gap: 3px;
    width: 57px;
    margin: 1px 0 1px 2px;
    padding-left: 3px;
    background: #3c80f0;
    font-size: 4px;
    white-space: nowrap;
}
.task.dark {
    margin-left: 6px;
    background: #1d4cb8;
}
.task i {
    flex: none;
    width: 5px;
    height: 5px;
    background: #c8d0dc;
}
.tray {
    display: flex;
    align-items: center;
    gap: 1px;
    width: 43px;
    margin-left: auto;
    background: #129be8;
    font-size: 4px;
    white-space: nowrap;
}
.tray i {
    width: 5px;
    height: 5px;
    background: #cfe0f0;
}
.tray .red {
    margin-right: 4px;
    background: #c84840;
}

/* right monitor */
.editor {
    display: flex;
    flex: 1;
    min-height: 0;
}
.rail {
    display: flex;
    flex-direction: column;
    justify-content: space-between;
    width: 33px;
    padding: 0 0 6px 1px;
}
.tab {
    height: 5px;
    border-radius: 2px;
    background: #858381;
    text-align: center;
    font-size: 4px;
    line-height: 5px;
}
.modes {
    display: flex;
    flex-direction: column;
    justify-content: space-between;
    height: 168px;
    padding-left: 1px;
    font-family: "Liberation Serif", serif;
}
.modes button {
    width: 28px;
    height: 10px;
    border-radius: 2px;
    background: linear-gradient(135deg, #b3b0ad 90%, #222 90%);
    border-right: 1px solid #8b8886;
    border-bottom: 1px solid #8b8886;
    font-size: 5px;
    font-weight: bold;
    line-height: 4px;
    white-space: nowrap;
}
.work {
    display: flex;
    flex: 1;
    flex-direction: column;
    min-width: 0;
}
.viewers {
    display: grid;
    grid-template-columns: 211fr 213fr;
}
.vhead {
    display: flex;
    align-items: center;
    gap: 2px;
    height: 11px;
    padding-right: 6px;
}
.record .vhead {
    padding-right: 0;
}
.name {
    width: 63px;
    height: 8px;
    background: #ece9d8;
}
.vb {
    width: 14px;
    height: 6px;
    border-radius: 3px;
    background: #b3b0ad;
    border-right: 1px solid #84817f;
    border-bottom: 1px solid #84817f;
    font-size: 6px;
    line-height: 5px;
}
.vb svg {
    width: 10px;
    height: 4px;
    margin: 0 auto;
}
.name + .vb {
    width: 8px;
}
.name + .vb svg {
    width: 7px;
}
.push {
    margin-left: auto;
}
.rgb {
    display: flex;
    width: 22px;
    height: 6px;
    border-radius: 3px;
    overflow: hidden;
}
.rgb i {
    flex: 1;
    background: #b8382c;
}
.rgb i:nth-child(2) {
    background: #5ce060;
}
.rgb i:nth-child(3) {
    background: #3858b0;
}
.key {
    background: linear-gradient(90deg, #b3b0ad 45%, #d81010 0 90%, #b3b0ad 0);
}
.screen {
    height: 155px;
    background: #2d2d2d;
}
.source {
    border-left: 3px solid #484a4a;
    border-right: 2px solid #484646;
}
.record .screen {
    border: 1px solid #c82c28;
    border-left-width: 2px;
}
.record .screen svg {
    width: 100%;
    height: 100%;
}
.minirulers {
    display: grid;
    grid-template-columns: 1fr 1fr;
    height: 9px;
    color: #dad7d4;
    font-size: 4px;
}
.mini {
    display: flex;
    min-width: 0;
    padding: 2px 4px 0;
    border-right: 1px solid #8b8886;
    background: repeating-linear-gradient(90deg, #b9b6b3 0 1px, transparent 0 4px) 0 1px / 100% 2px no-repeat;
}
.mini span {
    flex: 1;
    min-width: 0;
}
.mark {
    border-left: 3px solid #555c80;
}

/* transport */
.transport {
    height: 27px;
    padding: 1px 7px;
}
.row {
    display: flex;
    gap: 7px;
    height: 8px;
}
.grp {
    display: flex;
    flex: 11;
}
.mid {
    flex: 3;
}
.grp > * {
    flex: 1;
}
.grp button {
    height: 7px;
    border-radius: 0 4px 4px 0;
    background: #aeaba8;
    border-right: 1px solid #8b8886;
    border-bottom: 1px solid #9b9896;
}
.grp svg {
    width: 10px;
    height: 5px;
    margin: 0 auto;
}
.codes {
    gap: 0;
}
.tcs {
    display: flex;
    flex: 1 1 0;
    justify-content: flex-end;
    gap: 6px;
    padding-right: 20px;
}
.tcs.rec {
    padding-right: 14px;
}
.tcs label {
    width: 37px;
}
.tcs label, .stcs label {
    display: flex;
    align-items: center;
    justify-content: space-between;
}
.tcs input, .stcs input {
    width: 30px;
    height: 6px;
    border-radius: 3px;
    background: #353332;
    color: #e4e4e4;
    line-height: 6px;
    text-align: center;
}
.dim input {
    background: #74716f;
    color: #c4c1be;
}

/* timeline */
.timeline {
    position: relative;
    display: grid;
    grid-template-columns: 32px minmax(0, 1fr);
    grid-template-rows: 12px 9px 6px 7px 22px 22px;
    flex: 1;
}
.corner {
    display: flex;
    align-items: center;
    justify-content: flex-end;
    gap: 4px;
    padding-right: 4px;
    font-size: 8px;
    font-weight: bold;
}
.corner svg {
    width: 8px;
    height: 5px;
}
.overview {
    margin-right: 6px;
    background: #d4d2cf;
}
.ripple {
    padding: 2px 1px 0 9px;
}
.ripple button {
    display: block;
    width: 22px;
    height: 6px;
    border: 1px solid #555;
    border-radius: 3px;
    font-weight: bold;
    line-height: 4px;
}
.ruler {
    display: flex;
    background: repeating-linear-gradient(90deg, #444 0 1px, transparent 0 4px) 0 7px / 100% 2px no-repeat, #b9b6b3;
    font-size: 4px;
    line-height: 7px;
}
.ruler span {
    flex: 1;
    min-width: 0;
    padding-left: 1px;
    border-left: 1px solid #444;
}
.kmd {
    padding-right: 4px;
    text-align: right;
    font-weight: bold;
}
.thead {
    display: flex;
    padding-left: 6px;
    background: repeating-linear-gradient(45deg, #a9a6a3 0 1px, #bbb8b5 0 2px);
    border-bottom: 1px solid #555;
}
.thead i {
    display: flex;
    align-items: center;
    width: 5px;
    background: #6d7478;
    border-right: 1px solid #444;
    font-style: normal;
}
.thead b {
    display: flex;
    flex: 1;
    align-items: center;
    justify-content: center;
    background: #a9b2b8;
    font-weight: normal;
}
.thead.a2 b {
    background: #a8afc4;
}
.thead.fx b {
    margin-right: 2px;
    background: #8c9598;
}
.ms {
    display: flex;
    flex-direction: column;
    gap: 1px;
    width: 6px;
    background: #444;
}
.ms button {
    flex: 1;
    background: #b9b6b3;
    font-weight: bold;
}
.track.fx {
    background: #949b9a;
}
.track.v1 {
    background: #868b8f;
    border-top: 1px solid #7b8084;
}
.track.a2 {
    background: #6f7582;
    border-top: 1px solid #5c6274;
}
.playhead {
    position: absolute;
    left: 32px;
    top: 0;
    bottom: 0;
    border-left: 1px solid #5a58c0;
}
.scrollrow {
    display: flex;
    height: 9px;
    border: 1px solid #000;
    background: #a9a6a3;
}
.scrollrow button {
    width: 9px;
    background: #8f8c8a;
    border-right: 1px solid #666;
}
.scrollrow svg {
    width: 7px;
    height: 4px;
    margin: 0 auto;
}
.scrollrow .on {
    background: #d8d6d4;
}
.scrollrow .arrow {
    width: 12px;
    background: #b6b3b0;
}
.hthumb {
    width: 17px;
    background: #999693;
}
.track2 {
    width: 55px;
    background: #777472;
}
.bar {
    flex: 1;
    background: #9d9a98;
}
.rest {
    width: 6px;
    background: #6b6866;
}
.status {
    display: flex;
    align-items: center;
    height: 7px;
    padding: 0 2px 0 8px;
    background: #b3b0ad;
}
.mode {
    display: flex;
    align-items: center;
    gap: 3px;
    margin-right: 3px;
    font-family: "Liberation Serif", serif;
    font-size: 5px;
    font-weight: bold;
}
.mode input {
    appearance: none;
    width: 4px;
    height: 4px;
    border: 1px solid #777;
    border-radius: 2px;
}
.stcs {
    display: flex;
    gap: 2px;
    margin-left: 4px;
}
.stcs label {
    width: 33px;
}
.stcs .pos {
    margin-left: 4px;
}
.stcs input {
    width: 29px;
}
.stcs .dim {
    color: #444;
}
.sicons {
    display: flex;
    justify-content: space-between;
    width: 92px;
    margin-left: auto;
}
.sicons svg {
    width: 8px;
    height: 5px;
}
.sicons .green { color: #1c8a48; }
.sicons .orange { color: #d07830; }
.sicons .pale { color: #8b8886; }
```
